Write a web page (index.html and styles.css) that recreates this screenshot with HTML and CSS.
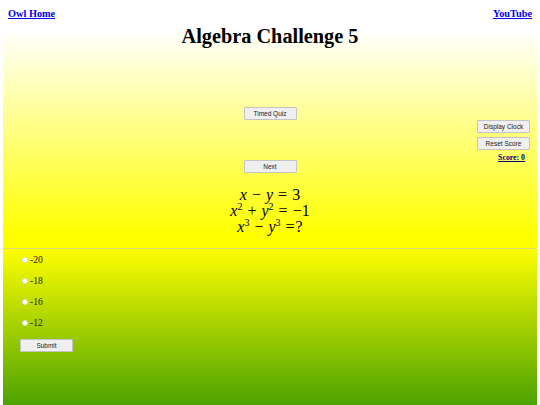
FILE: index.html
```html
<!DOCTYPE html>
<html lang="en">
<head>
    <meta charset="UTF-8">
    <meta name="viewport" content="width=device-width, initial-scale=1.0">
    <title>Algebra Challenge 5</title>
    <link rel="stylesheet" href="styles.css">
</head>
<body>
    <div class="page">
        <div class="top-links">
            <a href="#">Owl Home</a>
            <a href="#">YouTube</a>
        </div>
        <h1>Algebra Challenge 5</h1>

        <div class="quiz-area">
            <div class="center-col">
                <button class="btn">Timed Quiz</button>
                <button class="btn next-btn">Next</button>
                <div class="math">
                    <div><i>x</i> <span class="op">&minus;</span> <i>y</i> <span class="op">=</span> 3</div>
                    <div><i>x</i><sup>2</sup> <span class="op">+</span> <i>y</i><sup>2</sup> <span class="op">=</span> &minus;1</div>
                    <div><i>x</i><sup>3</sup> <span class="op">&minus;</span> <i>y</i><sup>3</sup> <span class="op">=</span>?</div>
                </div>
            </div>
            <div class="side-col">
                <button class="btn">Display Clock</button>
                <button class="btn">Reset Score</button>
                <div class="score">Score: 0</div>
            </div>
        </div>

        <hr>

        <form class="answers">
            <label><input type="radio" name="answer"> -20</label>
            <label><input type="radio" name="answer"> -18</label>
            <label><input type="radio" name="answer"> -16</label>
            <label><input type="radio" name="answer"> -12</label>
            <button type="button" class="btn submit-btn">Submit</button>
        </form>
    </div>
</body>
</html>
```

FILE: styles.css
```css
html, body {
    margin: 0;
    height: 100%;
    background: white;
}
body {
    font-family: "Liberation Serif", serif;
    overflow: hidden;
}
.page {
    margin: 0 3px;
    height: 405px;
    box-sizing: border-box;
    padding-top: 7px;
    background: linear-gradient(to bottom, #fff 0, #fff 30px, #ffff00 235px, #ffff00 248px, #4ca200 405px);
}
.top-links {
    display: flex;
    justify-content: space-between;
    padding: 0 5px;
    font-size: 10.3px;
    font-weight: bold;
    line-height: 13px;
}
.top-links a {
    color: #0000ee;
}
h1 {
    margin: 4px 0 0;
    text-align: center;
    font-size: 20.3px;
    line-height: 25px;
}
.quiz-area {
    display: grid;
    grid-template-columns: 1fr 100px 1fr;
    height: 198px;
    padding-top: 1px;
}
.center-col {
    grid-column: 2;
    display: flex;
    flex-direction: column;
    align-items: center;
    padding-top: 57px;
}
.side-col {
    grid-column: 3;
    display: flex;
    flex-direction: column;
    align-items: flex-end;
    gap: 4px;
    padding: 70px 7px 0 0;
}
.btn {
    width: 53px;
    height: 13px;
    padding: 0;
    font-family: "Liberation Sans", Arial, sans-serif;
    font-size: 6.5px;
    color: #222;
    background-color: #efefef;
    border: 1px solid #c4c4c4;
    border-radius: 1px;
}
.next-btn {
    margin-top: 40px;
}
.score {
    margin-top: -2px;
    padding-right: 5px;
    font-size: 7.8px;
    font-weight: bold;
    line-height: 11px;
    color: #000080;
    text-decoration: underline;
}
.math {
    margin-top: 14px;
    white-space: nowrap;
    text-align: center;
    font-size: 16px;
    line-height: 16px;
}
.math .op {
    padding: 0 1px;
}
.math sup {
    font-size: 10px;
    line-height: 0;
}
hr {
    margin: 0;
    border: none;
    height: 1px;
    background: #dcdc70;
}
.answers {
    display: flex;
    flex-direction: column;
    align-items: flex-start;
    padding: 0 0 0 17px;
    font-size: 9.6px;
}
.answers label {
    display: flex;
    align-items: center;
    gap: 2px;
    height: 21px;
    padding-left: 2px;
    color: #222;
}
.answers input {
    margin: 0;
    width: 6px;
    height: 6px;
    appearance: none;
    background: white;
    border: 0.5px solid #ddd;
    border-radius: 50%;
    box-sizing: border-box;
}
.submit-btn {
    margin-top: 6px;
}
```
